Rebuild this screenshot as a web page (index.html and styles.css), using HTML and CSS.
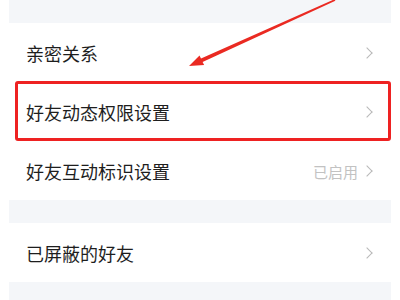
FILE: index.html
```html
<!DOCTYPE html>
<html lang="zh-CN">
<head>
    <meta charset="UTF-8">
    <title>好友设置</title>
    <link rel="stylesheet" href="styles.css">
</head>
<body>
<div class="page">
    <div class="gap"></div>
    <div class="item">
        <span class="label">亲密关系</span>
        <span class="arrow"></span>
    </div>
    <div class="item">
        <span class="label">好友动态权限设置</span>
        <span class="arrow"></span>
    </div>
    <div class="item">
        <span class="label">好友互动标识设置</span>
        <span class="value">已启用</span>
        <span class="arrow"></span>
    </div>
    <div class="gap"></div>
    <div class="item">
        <span class="label">已屏蔽的好友</span>
        <span class="arrow"></span>
    </div>
    <div class="gap gap-last"></div>

    <!-- annotation -->
    <div class="mark"></div>
    <svg class="pointer" width="400" height="300" viewBox="0 0 400 300">
        <polygon points="189,66 199.5,55.4 201,58.4 334.6,-0.8 335.4,0.8 202.6,62 204.1,65 " fill="#ea2a22"/>
    </svg>
</div>
</body>
</html>
```

FILE: styles.css
```css
* {
    box-sizing: border-box;
}

body {
    margin: 0;
    background: #fff;
    font-family: "Noto Sans CJK SC", "Noto Sans", sans-serif;
}

.page {
    position: relative;
    width: 400px;
    height: 300px;
    padding: 0 9px;
    overflow: hidden;
}

.gap {
    height: 23px;
    background: #f4f6f9;
}
.gap.gap-last {
    height: 30px;
}

.item {
    display: flex;
    align-items: center;
    height: 59px;
    padding: 1px 18px 0 17px;
}
.item .label {
    flex: 1;
    font-size: 18px;
    color: #1e1e1e;
}
.item .value {
    font-size: 15px;
    color: #c2c2c2;
    margin-right: 5px;
}
.item .arrow {
    width: 8px;
    height: 8px;
    border-top: 1.5px solid #b8b8b8;
    border-right: 1.5px solid #b8b8b8;
    transform: rotate(45deg);
    margin-right: 2px;
}

.mark {
    position: absolute;
    left: 15px;
    top: 81px;
    width: 376px;
    height: 60px;
    border: 3px solid #ee2222;
    border-radius: 3px;
}

.pointer {
    position: absolute;
    left: 0;
    top: 0;
}
```
